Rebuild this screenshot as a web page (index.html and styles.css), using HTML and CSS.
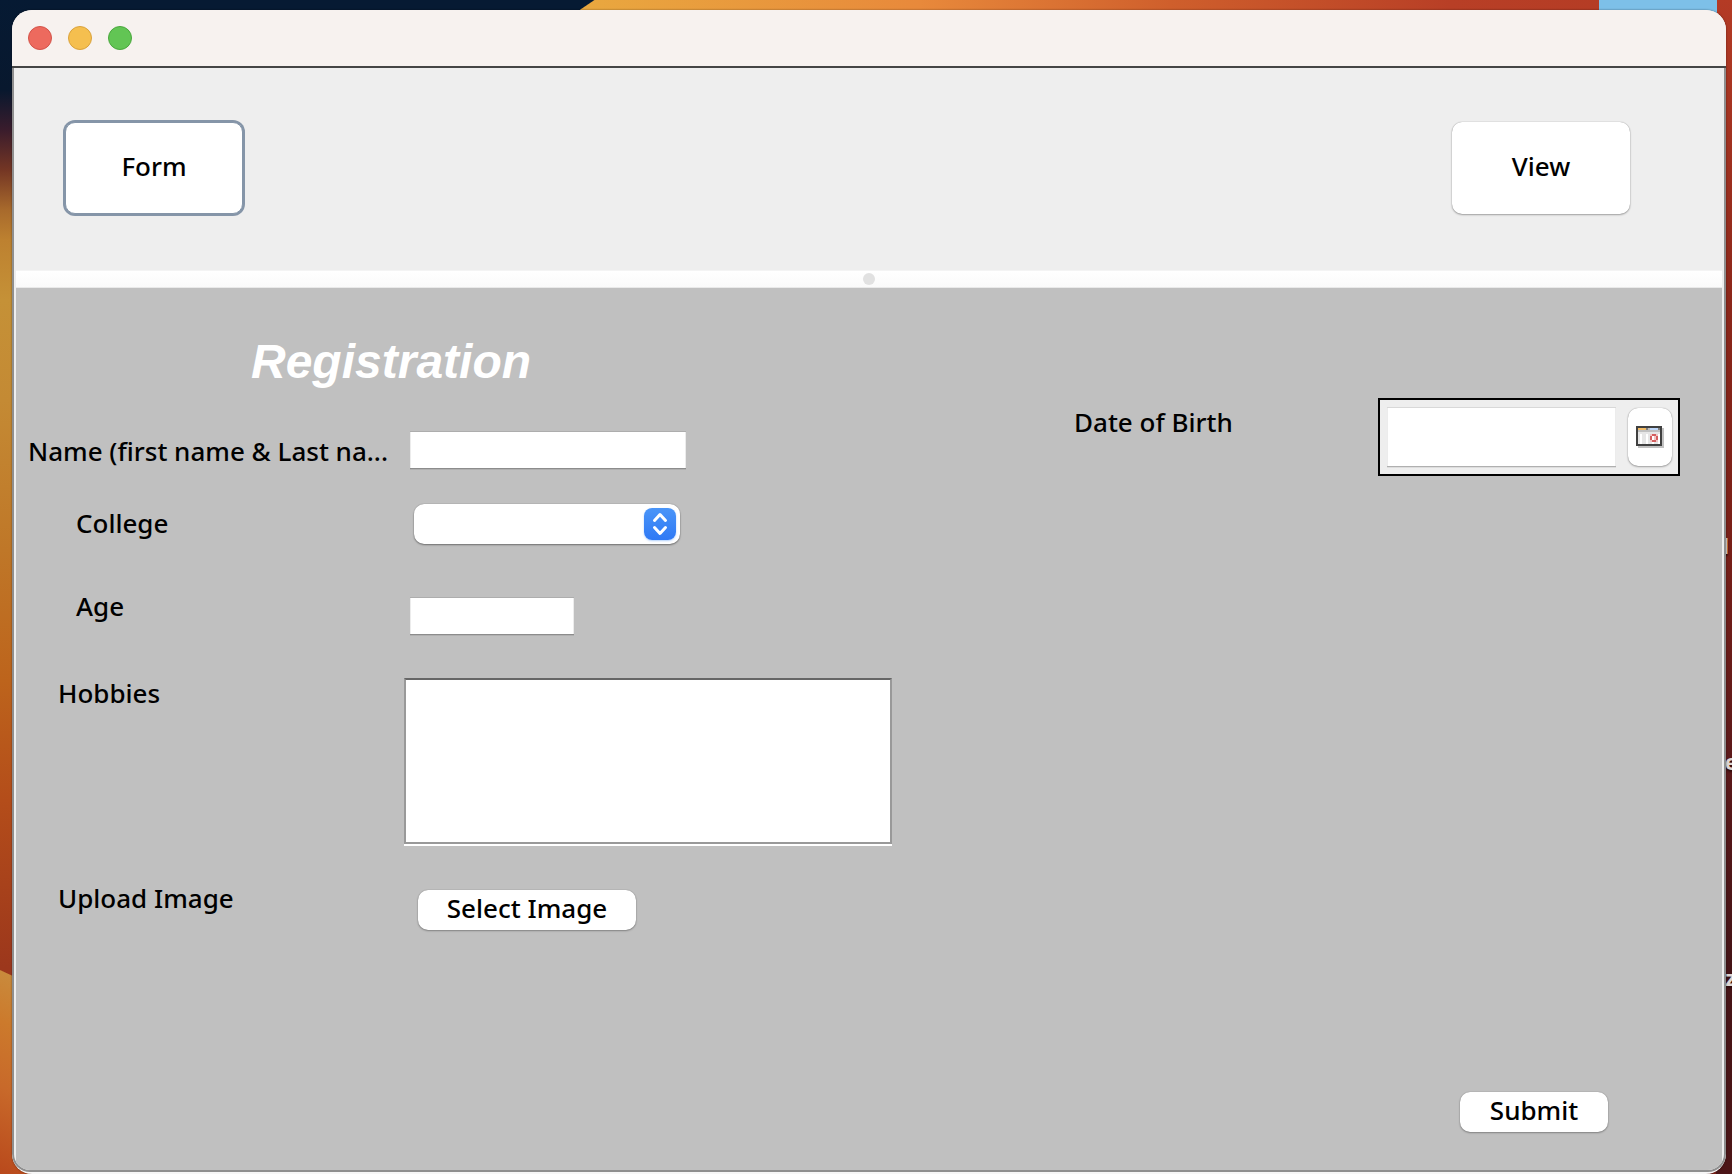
FILE: index.html
```html
<!DOCTYPE html>
<html lang="en">
<head>
<meta charset="utf-8">
<title>Registration</title>
<link rel="stylesheet" href="styles.css">
</head>
<body>
<div class="desktop">
  <div class="wallpaper-top"></div>
  <div class="wallpaper-left"></div>
  <div class="wallpaper-right"></div>
  <div class="folder"></div>
  <span class="file-name file-first">l</span>
  <span class="file-name file-second">e</span>
  <span class="file-name file-third">z</span>

  <div class="window">
    <header class="titlebar">
      <button class="light close" type="button" aria-label="Close"></button>
      <button class="light minimize" type="button" aria-label="Minimize"></button>
      <button class="light maximize" type="button" aria-label="Zoom"></button>
    </header>
    <div class="content">
      <nav class="toolbar">
        <button class="button tab focused" type="button">Form</button>
        <button class="button tab" type="button">View</button>
      </nav>
      <div class="splitter"><span class="grip"></span></div>
      <form class="form">
        <section class="details">
          <h1 class="title">Registration</h1>
          <div class="fields">
            <label class="label label-wide" for="name">Name (first name &amp; Last na...</label>
            <input class="text-field name-field" id="name" type="text">

            <label class="label label-inset" for="college">College</label>
            <div class="combo">
              <select class="combo-select" id="college"><option></option></select>
              <svg class="combo-arrows" viewBox="0 0 32 32" aria-hidden="true">
                <path d="M10.500 12.500 L16 6.500 L21.500 12.500 M10.500 19.500 L16 25.500 L21.500 19.500"/>
              </svg>
            </div>

            <label class="label label-inset label-raised" for="age">Age</label>
            <input class="text-field age-field" id="age" type="text">

            <label class="label label-raised" for="hobbies">Hobbies</label>
            <textarea class="text-area" id="hobbies"></textarea>

            <label class="label label-raised" for="upload">Upload Image</label>
            <button class="button upload" id="upload" type="button">Select Image</button>
          </div>
        </section>
        <section class="aside">
          <div class="birth">
            <label class="birth-label" for="birth">Date of Birth</label>
            <div class="date-picker">
              <input class="text-field date-field" id="birth" type="text">
              <button class="button date-button" type="button" aria-label="Choose date">
                <svg class="calendar" viewBox="0 0 14 11" shape-rendering="crispEdges" aria-hidden="true">
                  <path fill="#c2c2c2" d="M1 1h13v10H1z"/>
                  <path fill="#404040" d="M0 0h13v10H0z"/>
                  <path fill="#fff" d="M1 1h11v8H1z"/>
                  <path fill="#f3bd68" d="M1 1h4v1H1z"/>
                  <path fill="#808080" d="M5 1h1v1H5zM11 1h1v1h-1z"/>
                  <path fill="#c0c0c0" d="M6 1h1v1H6zM1 2h11v1H1z"/>
                  <path fill="#bfd8fb" d="M7 1h4v1H7z"/>
                  <path fill="#e6e6e6" d="M1 3h11v1H1zM1 4h1v5H1zM3 4h2v5H3zM6 4h2v5H6zM9 4h2v5H9z"/>
                  <path fill="#f0c4c4" d="M7 4h4v4H7z"/>
                  <path fill="#d45f5f" d="M8 4h2v1H8zM8 7h2v1H8zM7 5h1v2H7zM10 5h1v2h-1z"/>
                  <path fill="#fff" d="M8 5h1v2H8z"/>
                </svg>
              </button>
            </div>
          </div>
          <button class="button submit" type="submit">Submit</button>
        </section>
      </form>
    </div>
  </div>
</div>
</body>
</html>
```
FILE: styles.css
```css
* {
  box-sizing: border-box;
}

body {
  margin: 0;
  font-family: "Noto Sans", "Open Sans", sans-serif;
  font-size: 26px;
  font-weight: 500;
  line-height: 30px;
  color: #000;
}

button,
input,
select,
textarea {
  margin: 0;
  padding: 0;
  border: 0;
  font: inherit;
  color: inherit;
}

.desktop {
  position: relative;
  min-height: 100vh;
  padding: 10px 6px 0 12px;
  overflow: hidden;
  background: #7e2018;
}

/* Wallpaper bands that show round the window */
.wallpaper-top {
  position: absolute;
  inset: 0 0 auto 0;
  height: 30px;
  background:
    linear-gradient(146deg, #061a33 0, #061a33 calc(50% - 1px), transparent 50%) 556px 0 / 55px 16px no-repeat,
    linear-gradient(#061a33, #061a33) 0 0 / 556px 100% no-repeat,
    linear-gradient(90deg, #e9a83f 580px, #e8893b 920px, #cf5f2c 1170px, #b83f26 1450px, #b23a24 100%);
}

.wallpaper-left {
  position: absolute;
  inset: 0 auto 0 0;
  width: 30px;
  background:
    linear-gradient(205deg, transparent 14px, #c98a3c 15px, #cc7a2c 60px, #c8692a 120px, #b9491c 100%) 0 968px / 100% 206px no-repeat,
    linear-gradient(#061a33 0, #08182e 90px, #3a1c2c 130px, #743624 170px, #a86a2c 210px, #bd8130 240px, #c59137 300px, #c48a34 400px, #bf7728 550px, #bd641c 680px, #b44d1a 800px, #9c371c 968px, #9c371c 100%);
}

.wallpaper-right {
  position: absolute;
  inset: 0 0 0 auto;
  width: 16px;
  background: linear-gradient(#b43b25, #8c271a 300px, #7b2018 520px, #5c191a 760px, #451417 960px, #4c1517 100%);
}

.folder {
  position: absolute;
  top: 0;
  right: 15px;
  width: 118px;
  height: 24px;
  background: #7dc0e8;
}

.file-name {
  position: absolute;
  right: -6px;
  font-size: 22px;
  font-weight: 700;
  color: #ddd6d4;
  text-shadow: 0 2px 2px #300c0c;
}

.file-first {
  right: 3px;
  top: 530px;
}

.file-second {
  top: 746px;
}

.file-third {
  right: -4px;
  top: 962px;
}

.window {
  position: relative;
  display: flex;
  flex-direction: column;
  min-height: calc(100vh - 10px);
  padding-bottom: 2px;
  overflow: hidden;
  border-radius: 20px;
  background: #f7f7f7;
  box-shadow: 0 0 2px rgba(0, 0, 0, 0.5);
}

.titlebar {
  display: flex;
  align-items: center;
  gap: 16px;
  height: 58px;
  padding: 0 16px;
  background: #f7f2ef;
  border-bottom: 2px solid #454545;
}

.light {
  width: 24px;
  height: 24px;
  border: 1px solid;
  border-radius: 50%;
}

.close {
  background: #ed6a5e;
  border-color: #d35349;
}

.minimize {
  background: #f5bf4f;
  border-color: #d9a23c;
}

.maximize {
  background: #62c554;
  border-color: #4aa73d;
}

.content {
  flex: 1;
  display: flex;
  flex-direction: column;
  border: solid #8f8f8f;
  border-width: 0 2px 2px;
  border-radius: 0 0 18px 18px;
  padding: 0 2px;
  overflow: hidden;
  background: #eee;
}

.toolbar {
  display: flex;
  justify-content: space-between;
  padding: 54px 92px 56px 49px;
}

.button {
  border-radius: 10px;
  padding-bottom: 4px;
  background: #fff;
  box-shadow: 0 0 1px rgba(0, 0, 0, 0.4), 0 1px 2px rgba(0, 0, 0, 0.3);
}

.tab {
  width: 178px;
  height: 92px;
}

.focused {
  border: 1px solid #8595a8;
  box-shadow: 0 0 0 2px #8595a8;
}

.splitter {
  display: flex;
  align-items: center;
  justify-content: center;
  height: 18px;
  border-top: 1px solid #f4f4f4;
  border-bottom: 1px solid #e9e9e9;
  background: linear-gradient(#fff, #fafafa);
}

.grip {
  width: 12px;
  height: 12px;
  border-radius: 50%;
  background: #e1e1e1;
}

.form {
  flex: 1;
  display: flex;
  justify-content: space-between;
  background: #c0c0c0;
}

.details {
  padding-top: 46px;
}

.title {
  margin: 0 0 42px 235px;
  font: italic bold 48px/56px "Liberation Sans", Arial, sans-serif;
  color: #fff;
}

.fields {
  display: grid;
  grid-template-columns: 388px 488px;
  grid-template-rows: 72px 87px 87px 205px auto;
  align-items: start;
}

.label {
  padding: 4px 0 0 42px;
}

.label-wide {
  padding-left: 12px;
  white-space: nowrap;
}

.label-inset {
  padding-left: 60px;
}

.label-raised {
  padding-top: 0;
}

.text-field {
  height: 36px;
  border: solid #ececec;
  border-width: 0 1px;
  background: #fff;
  box-shadow: 0 -1px 0 #adadad, 0 1px 0 #8c8c8c, 0 2px 0 #b0b0b0;
}

.name-field {
  width: 276px;
  margin-left: 6px;
}

.age-field {
  width: 164px;
  margin: 7px 0 0 6px;
}

.combo {
  position: relative;
  width: 266px;
  height: 40px;
  margin-left: 10px;
}

.combo-select {
  appearance: none;
  width: 100%;
  height: 100%;
  padding: 0 40px 0 12px;
  border-radius: 10px;
  background: #fff;
  box-shadow: 0 0 1px rgba(0, 0, 0, 0.4), 0 1px 2px rgba(0, 0, 0, 0.4);
}

.combo-arrows {
  position: absolute;
  top: 4px;
  right: 4px;
  width: 32px;
  height: 32px;
  border-radius: 8px;
  background: linear-gradient(#4a95f8, #2f79f5);
  box-shadow: 0 1px 2px rgba(60, 140, 250, 0.4);
  fill: none;
  stroke: #fff;
  stroke-width: 3;
  stroke-linecap: round;
  stroke-linejoin: round;
  pointer-events: none;
}

.text-area {
  width: 488px;
  height: 166px;
  border: 2px solid #999;
  border-top-color: #666;
  background: #fff;
  box-shadow: 0 2px 0 #fff;
  resize: none;
}

.upload {
  width: 218px;
  height: 40px;
  margin: 7px 0 0 14px;
}

.aside {
  display: flex;
  flex-direction: column;
  justify-content: space-between;
  padding: 110px 42px 38px 0;
}

.birth {
  display: flex;
  align-items: flex-start;
}

.birth-label {
  width: 304px;
  padding-top: 9px;
}

.date-picker {
  display: flex;
  justify-content: space-between;
  width: 302px;
  height: 78px;
  padding: 8px 6px 8px 7px;
  border: 2px solid #000;
  background: #eee;
}

.date-field {
  width: 229px;
  height: 58px;
  box-shadow: 0 -1px 0 #d8d8d8, 0 1px 0 #b0b0b0, 0 2px 0 #ddd;
}

.date-button {
  display: flex;
  align-items: center;
  justify-content: center;
  width: 44px;
  height: 58px;
  padding: 0;
}

.calendar {
  width: 28px;
  height: 22px;
}

.submit {
  align-self: flex-end;
  width: 148px;
  height: 40px;
  margin-right: 72px;
}
```
